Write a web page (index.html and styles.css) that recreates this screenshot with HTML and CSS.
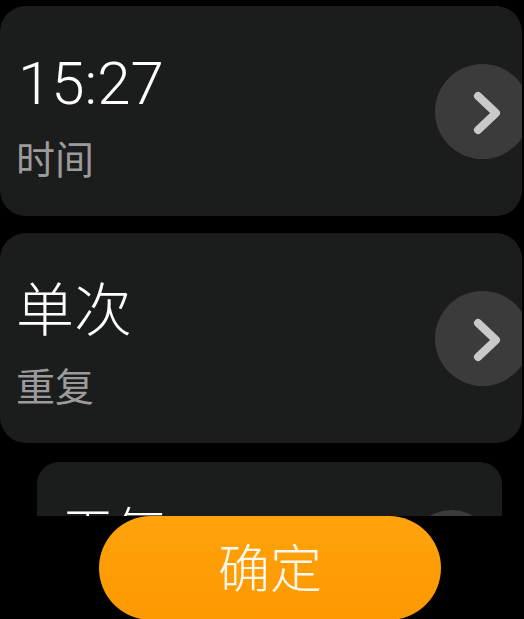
FILE: index.html
```html
<!DOCTYPE html>
<html>
<head>
    <meta charset="utf-8">
    <title>闹钟</title>
    <link rel="stylesheet" href="styles.css">
</head>
<body>
    <div class="list">
        <div class="card">
            <div class="info">
                <div class="title digits">15:27</div>
                <div class="label">时间</div>
            </div>
            <div class="arrow">
                <svg viewBox="0 0 95 95" width="95" height="95">
                    <path d="M43 32 L61 49 L43 66" />
                </svg>
            </div>
        </div>
        <div class="card">
            <div class="info">
                <div class="title">单次</div>
                <div class="label">重复</div>
            </div>
            <div class="arrow">
                <svg viewBox="0 0 95 95" width="95" height="95">
                    <path d="M43 32 L61 49 L43 66" />
                </svg>
            </div>
        </div>
        <div class="card card-small">
            <div class="info">
                <div class="title">天气</div>
                <div class="label">提醒</div>
            </div>
            <div class="arrow">
                <svg viewBox="0 0 95 95" width="85" height="85">
                    <path d="M43 32 L61 49 L43 66" />
                </svg>
            </div>
        </div>
    </div>
    <div class="footer">
        <button class="confirm">确定</button>
    </div>
</body>
</html>
```

FILE: styles.css
```css
html, body {
    margin: 0;
    padding: 0;
}

body {
    width: 524px;
    height: 619px;
    overflow: hidden;
    background-color: #000;
    font-family: Roboto, "Noto Sans CJK SC", sans-serif;
    color: #fff;
}

.list {
    height: 516px;
    overflow: hidden;
    display: flex;
    flex-direction: column;
    gap: 17px;
    padding-top: 6px;
    box-sizing: border-box;
}

.card {
    flex-shrink: 0;
    width: 522px;
    height: 210px;
    background-color: #1b1c1c;
    border-radius: 26px;
    overflow: hidden;
    display: flex;
    align-items: center;
    justify-content: space-between;
    box-sizing: border-box;
    padding-left: 16px;
}

.info {
    display: flex;
    flex-direction: column;
}

.title {
    font-size: 58px;
    font-weight: 300;
    line-height: 64px;
    margin-top: 14px;
}

.digits {
    font-size: 60px;
    margin-left: 2px;
}

.label {
    font-size: 39px;
    line-height: 48px;
    color: #9b9b9b;
    margin-top: 21px;
}

.arrow {
    flex-shrink: 0;
    width: 95px;
    height: 95px;
    border-radius: 50%;
    background-color: #3b3b3b;
    margin-right: -8px;
}

.arrow svg {
    display: block;
}

.arrow path {
    fill: none;
    stroke: #c9c9c9;
    stroke-width: 8;
    stroke-linecap: round;
    stroke-linejoin: round;
}

/* third card is drawn smaller, like the watch list edge */
.card-small {
    width: 465px;
    height: 180px;
    margin-left: 37px;
    margin-top: 2px;
    border-radius: 22px;
    padding-left: 25px;
    align-items: flex-start;
}

.card-small .info {
    padding-top: 26px;
}

.card-small .title {
    font-size: 52px;
}

.card-small .arrow {
    align-self: center;
    width: 85px;
    height: 85px;
    margin-right: 8px;
}

.footer {
    padding-left: 99px;
}

.confirm {
    display: block;
    width: 342px;
    height: 104px;
    border: none;
    border-radius: 52px;
    background: linear-gradient(#ffa30c, #fd9800);
    color: #fff8ee;
    font-family: "Noto Sans CJK SC", sans-serif;
    font-size: 52px;
    font-weight: 300;
    padding: 0 0 6px 0;
}
```
